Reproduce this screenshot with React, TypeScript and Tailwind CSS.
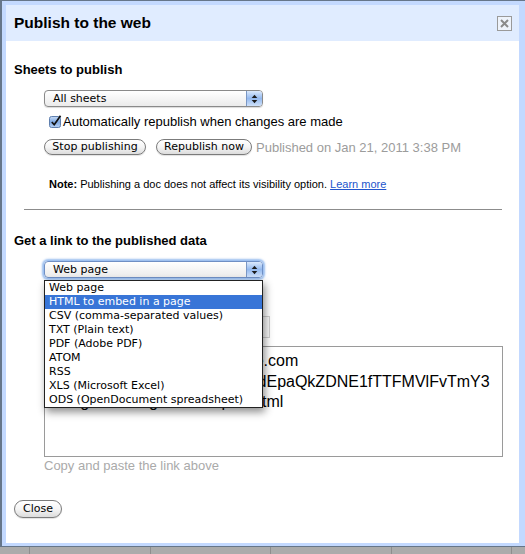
import React from "react";

function Stepper() {
  return (
    <div className="absolute right-0 top-0 bottom-0 w-[16px] rounded-r-[3px] border-l border-[#7a97c4] bg-gradient-to-b from-[#dbe9fc] via-[#94b9ee] to-[#cfe1fa] flex items-center justify-center">
      <svg width="7" height="10" viewBox="0 0 7 10">
        <path d="M3.5 0.8 L6.3 4 L0.7 4 Z" fill="#1b1b1b" />
        <path d="M0.7 6 L6.3 6 L3.5 9.2 Z" fill="#1b1b1b" />
      </svg>
    </div>
  );
}

function Select({ label, focused }: { label: string; focused?: boolean }) {
  return (
    <div
      className={
        focused
          ? "relative w-[219px] h-[17px] rounded-[4px] border border-[#6f8fc4] bg-gradient-to-b from-white to-[#ebebeb] shadow-[0_0_2px_2px_rgba(100,155,230,0.65)]"
          : "relative w-[219px] h-[17px] rounded-[4px] border border-[#8a8a8a] bg-gradient-to-b from-white to-[#ebebeb] shadow-[0_1px_1px_rgba(0,0,0,0.15)]"
      }
    >
      <span className="absolute left-[8px] top-0 leading-[15px] text-[11px] text-black font-['DejaVu_Sans',sans-serif]">
        {label}
      </span>
      <Stepper />
    </div>
  );
}

function Btn({ children, w, h }: { children: React.ReactNode; w: string; h: string }) {
  return (
    <div
      className={
        "flex items-center justify-center rounded-full border border-[#7b7b7b] bg-gradient-to-b from-white via-[#f5f5f5] to-[#dcdcdc] text-[11px] text-black font-['DejaVu_Sans',sans-serif] shadow-[0_1px_1px_rgba(0,0,0,0.12)] " +
        w +
        " " +
        h
      }
    >
      {children}
    </div>
  );
}

function Checkbox() {
  return (
    <svg width="13" height="13" viewBox="0 0 13 13">
      <defs>
        <linearGradient id="cb" x1="0" y1="0" x2="0" y2="1">
          <stop offset="0" stopColor="#c9ddf7" />
          <stop offset="0.5" stopColor="#7fa9e3" />
          <stop offset="1" stopColor="#b8d2f5" />
        </linearGradient>
      </defs>
      <rect x="0.5" y="1.5" width="11" height="11" rx="2" fill="url(#cb)" stroke="#5f7fae" />
      <path d="M2.8 7 L5.2 9.8 L11.5 0.8" fill="none" stroke="#111" strokeWidth="1.7" strokeLinejoin="round" />
    </svg>
  );
}

const items = [
  "Web page",
  "HTML to embed in a page",
  "CSV (comma-separated values)",
  "TXT (Plain text)",
  "PDF (Adobe PDF)",
  "ATOM",
  "RSS",
  "XLS (Microsoft Excel)",
  "ODS (OpenDocument spreadsheet)",
];

export default function App() {
  return (
    <div className="relative w-[525px] h-[554px] overflow-hidden bg-[#ababab] font-['Liberation_Sans',Arial,sans-serif] text-black">
      <div className="h-[547px] border-t border-l-2 border-b border-[#66768a] bg-[#c3d9ff] pt-[4px] pl-[4px] pr-[6px] pb-[3px] flex flex-col">
        {/* Title bar */}
        <div className="h-[36px] bg-[#e0ecff] flex items-center justify-between pl-[8px] pr-[7px]">
          <span className="text-[15.5px] font-bold leading-[18px]">Publish to the web</span>
          <div className="w-[15px] h-[15px] border border-[#9a9a9a] bg-[#eef3fb] flex items-center justify-center">
            <svg width="11" height="11" viewBox="0 0 11 11">
              <path d="M2 2 L9 9 M9 2 L2 9" stroke="#8a8a8a" strokeWidth="2" />
            </svg>
          </div>
        </div>

        {/* Content */}
        <div className="relative flex-1 bg-white pt-[21px] pl-[8px] flex flex-col">
          <div className="text-[13px] font-bold leading-[15px]">Sheets to publish</div>

          <div className="mt-[13px] ml-[30px]">
            <Select label="All sheets" />
          </div>

          <div className="mt-[7px] ml-[35px] flex items-center h-[15px]">
            <Checkbox />
            <span className="ml-[1px] text-[13px] leading-[15px]">Automatically republish when changes are made</span>
          </div>

          <div className="mt-[10px] ml-[30px] flex items-center">
            <Btn w="w-[102px]" h="h-[16px]">Stop publishing</Btn>
            <div className="w-[10px]" />
            <Btn w="w-[96px]" h="h-[16px]">Republish now</Btn>
            <span className="ml-[4px] text-[13px] leading-[15px] text-[#9c9c9c]">Published on Jan 21, 2011 3:38 PM</span>
          </div>

          <div className="mt-[23px] ml-[35px] text-[11px] leading-[13px]">
            <span className="font-bold">Note:</span> Publishing a doc does not affect its visibility option.{" "}
            <span className="text-[#2255cc] underline">Learn more</span>
          </div>

          <div className="mt-[18px] ml-[10px] w-[478px] h-px bg-[#8c8c8c]" />

          <div className="mt-[23px] text-[13px] font-bold leading-[15px]">Get a link to the published data</div>

          <div className="mt-[13px] ml-[30px]">
            <Select label="Web page" focused />
          </div>

          <div className="mt-[38px] ml-[30px] w-[226px] h-[22px] border border-[#cfcfcf] bg-[#fafafa]" />

          <div className="mt-[8px] ml-[30px] w-[459px] h-[111px] border border-[#9a9a9a] pt-[4px] pl-[4px] overflow-hidden text-[16px] leading-[20.5px] whitespace-nowrap">
            <div className="pl-[18px]">https://spreadsheets.google.com</div>
            <div>/pub?key=0AqMhTe8sw2rBmdEpaQkZDNE1fTTFMVlFvTmY3</div>
            <div>&amp;single=true&amp;gid=0&amp;output=html</div>
          </div>

          <div className="mt-[1px] ml-[30px] text-[13px] leading-[15px] text-[#aaaaaa]">Copy and paste the link above</div>

          <div className="mt-[27px]">
            <Btn w="w-[48px]" h="h-[18px]">Close</Btn>
          </div>

          {/* Dropdown list (open) */}
          <div className="absolute left-[38px] top-[239px] w-[219px] border border-[#222] bg-white shadow-[2px_4px_8px_rgba(0,0,0,0.45)] font-['DejaVu_Sans',sans-serif] text-[11px]">
            {items.map((it, i) => (
              <div
                key={it}
                className={
                  i === 1
                    ? "h-[14px] leading-[14px] pl-[4px] bg-[#3875d7] text-white"
                    : "h-[14px] leading-[14px] pl-[4px] text-black"
                }
              >
                {it}
              </div>
            ))}
          </div>
        </div>
      </div>

      {/* Spreadsheet strip behind */}
      <div className="flex h-[7px]">
        <div className="w-[30px] border-r border-[#8e8e8e]" />
        <div className="w-[121px] border-r border-[#8e8e8e]" />
        <div className="w-[120px] border-r border-[#8e8e8e]" />
        <div className="w-[121px] border-r border-[#8e8e8e]" />
        <div className="w-[120px] border-r border-[#8e8e8e]" />
      </div>
    </div>
  );
}
